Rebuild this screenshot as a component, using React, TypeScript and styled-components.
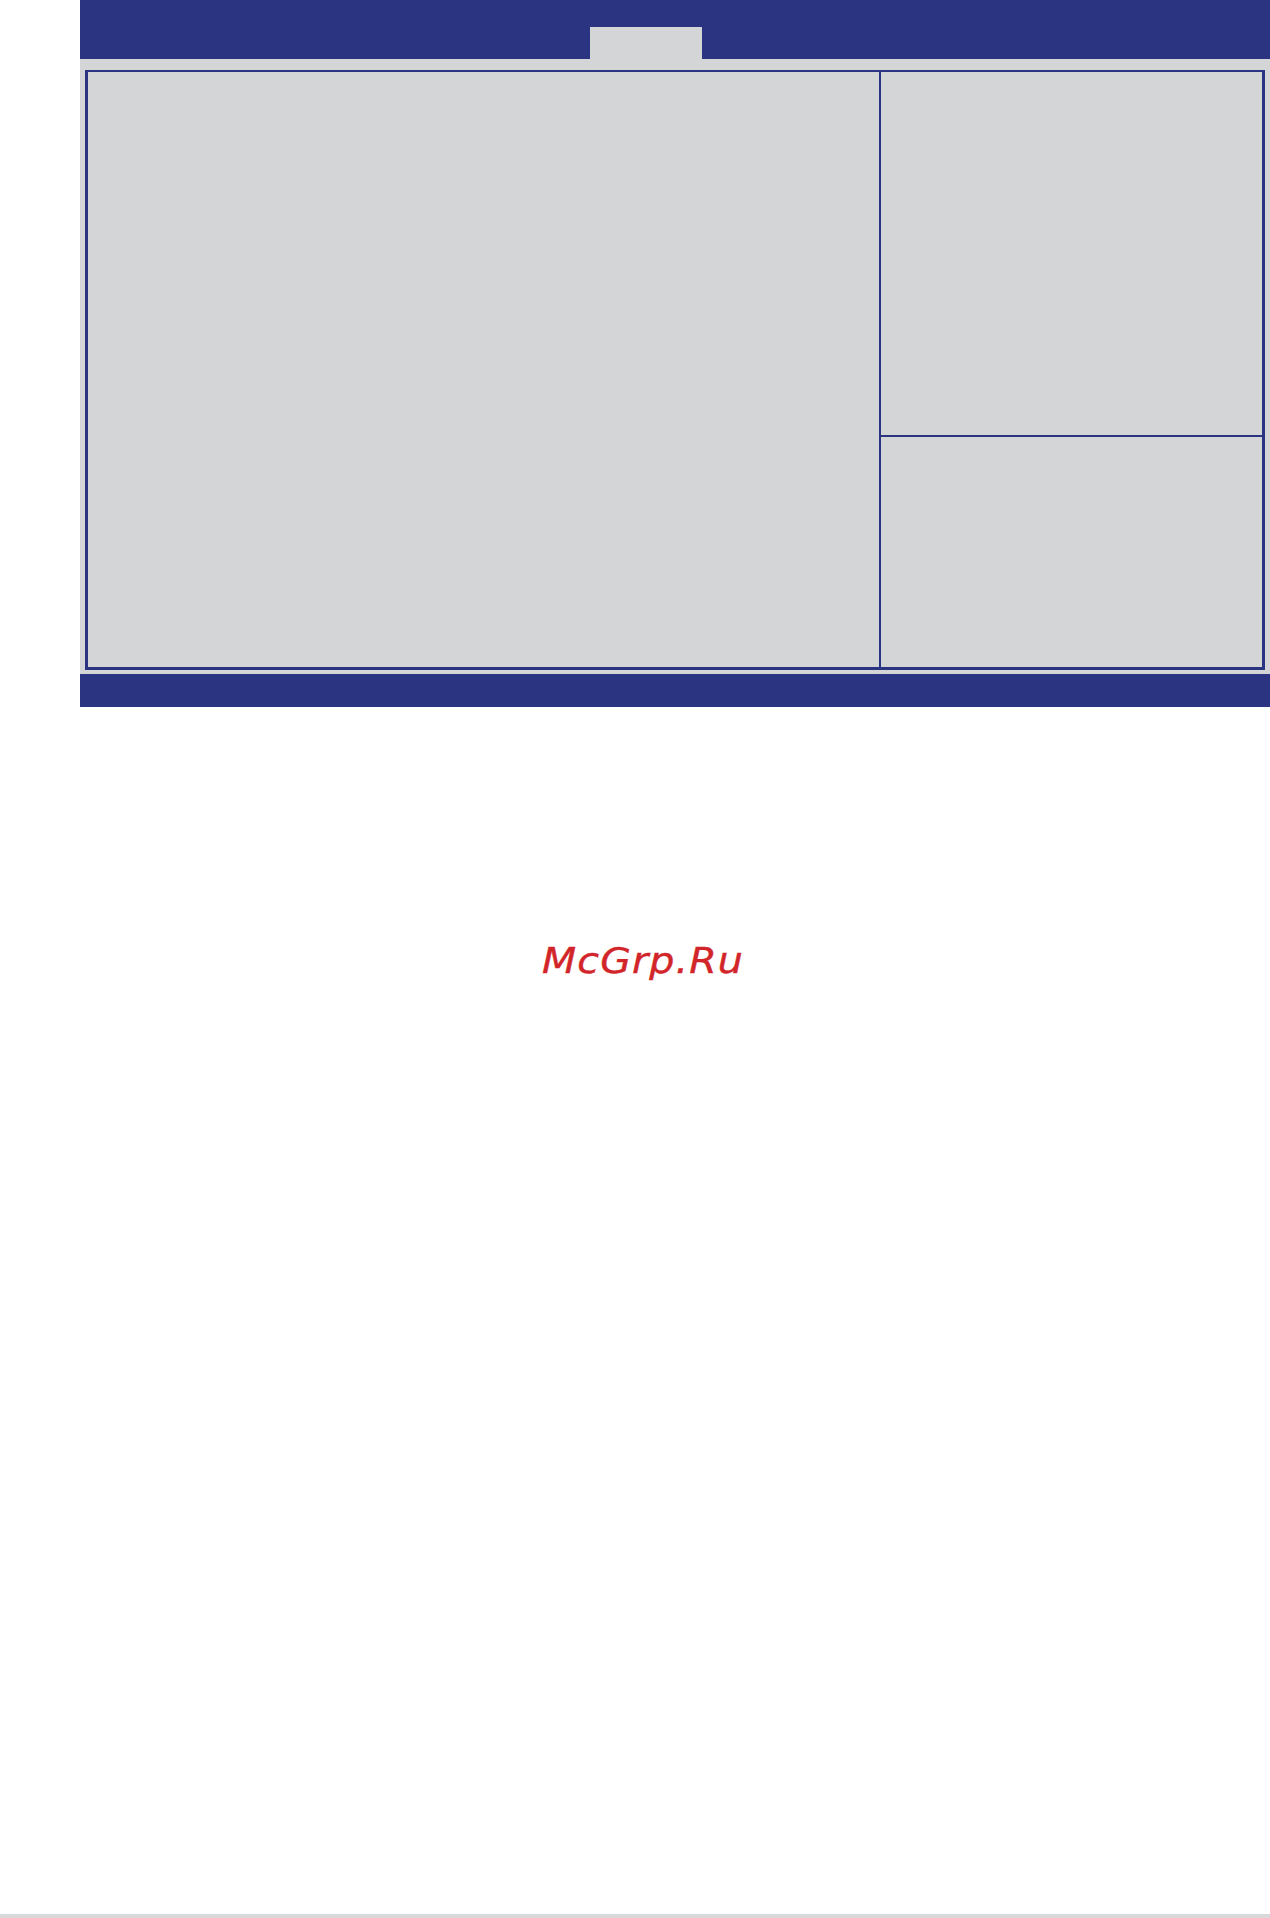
import React from "react";
import styled, { createGlobalStyle } from "styled-components";

const GlobalStyle = createGlobalStyle`
  html, body {
    margin: 0;
    padding: 0;
    background: #ffffff;
    font-family: "DejaVu Sans", "Liberation Sans", sans-serif;
  }
`;

const BLUE = "#2b3481";
const GRAY = "#d4d5d7";

const Page = styled.div`
  position: relative;
  width: 1270px;
  height: 1918px;
  overflow: hidden;
`;

const Screen = styled.div`
  margin-left: 80px;
  width: 1190px;
  display: flex;
  flex-direction: column;
`;

const Header = styled.div`
  height: 59px;
  background: ${BLUE};
  display: flex;
  align-items: flex-end;
  padding-left: 510px;
  box-sizing: border-box;
`;

const Tab = styled.div`
  width: 112px;
  height: 32px;
  background: ${GRAY};
`;

const Body = styled.div`
  background: ${GRAY};
  padding: 11px 5px 4px 5px;
`;

const Frame = styled.div`
  height: 600px;
  box-sizing: border-box;
  border: 3px solid ${BLUE};
  border-top-width: 2px;
  display: flex;
`;

const MainPane = styled.div`
  width: 791px;
`;

const SidePane = styled.div`
  flex: 1;
  border-left: 2px solid ${BLUE};
  display: flex;
  flex-direction: column;
`;

const HelpBox = styled.div<{ height?: number }>`
  height: ${({ height }) => (height ? `${height}px` : "auto")};
  flex: ${({ height }) => (height ? "none" : 1)};
`;

const Divider = styled.div`
  height: 2px;
  background: ${BLUE};
`;

const Footer = styled.div`
  height: 33px;
  background: ${BLUE};
`;

const Watermark = styled.div`
  margin-top: 233px;
  padding-left: 542px;
`;

const WatermarkText = styled.span`
  display: inline-block;
  font-family: "DejaVu Sans", sans-serif;
  font-style: oblique;
  font-size: 36px;
  line-height: normal;
  letter-spacing: 1px;
  color: #d2252a;
  transform: scaleX(1.1);
  transform-origin: left center;
  -webkit-text-stroke: 0.4px #d2252a;
`;

const BottomRule = styled.div`
  position: absolute;
  left: 0;
  right: 0;
  bottom: 0;
  height: 4px;
  background: #d9d9db;
`;

const App = (): JSX.Element => (
  <Page>
    <GlobalStyle />
    <Screen>
      <Header>
        <Tab />
      </Header>
      <Body>
        <Frame>
          <MainPane />
          <SidePane>
            <HelpBox height={363} />
            <Divider />
            <HelpBox />
          </SidePane>
        </Frame>
      </Body>
      <Footer />
    </Screen>
    <Watermark>
      <WatermarkText>McGrp.Ru</WatermarkText>
    </Watermark>
    <BottomRule />
  </Page>
);

export default App;
